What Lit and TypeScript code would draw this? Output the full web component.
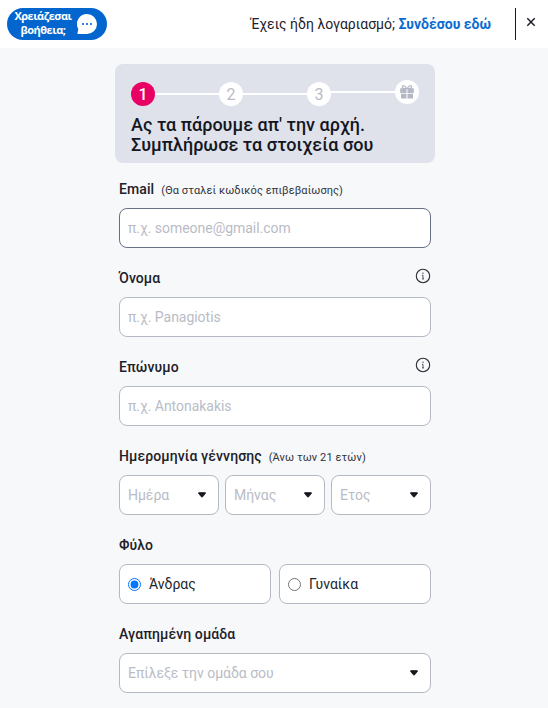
import { LitElement, html, css, svg, nothing } from "lit";
import { customElement } from "lit/decorators.js";

const infoIcon = html`<svg class="info" width="16" height="16" viewBox="0 0 16 16" fill="none">
  <circle cx="8" cy="8" r="6.7" stroke="#2a2e36" stroke-width="1.1" />
  <path d="M7 7.3H8V10.8M7 10.9H9" stroke="#2a2e36" stroke-width="0.8" />
  <circle cx="8" cy="5.2" r=".65" fill="#2a2e36" />
</svg>`;

const caret = html`<svg class="caret" width="10" height="8" viewBox="0 0 10 8">
  <path d="M2 1.6H8Q8.8 1.6 8.4 2.4L5.7 5.8Q5 6.5 4.3 5.8L1.6 2.4Q1.2 1.6 2 1.6Z" fill="#15181e" stroke="#15181e" stroke-width=".7" />
</svg>`;

const giftIcon = html`<svg width="16" height="16" viewBox="0 0 16 16" fill="none">
  <path d="M7.6 4.6C6.8 1.6 3.5 .6 3.4 2.9C3.4 4.4 5.4 4.6 7.6 4.6ZM8.4 4.6C9.2 1.6 12.5 .6 12.6 2.9C12.6 4.4 10.6 4.6 8.4 4.6Z" stroke="#b4b8c4" stroke-width="1.2" />
  <path d="M1.2 4.3H7.5V8.9H1.2ZM8.5 4.3H14.8V8.9H8.5ZM2 9.8H7.5V14.6H2ZM8.5 9.8H14V14.6H8.5Z" fill="#b4b8c4" />
</svg>`;

@customElement("app-root")
export class AppRoot extends LitElement {
  static styles = css`
    :host {
      display: block;
      height: 708px;
      overflow: hidden;
      box-sizing: border-box;
      background: #f7f8fa;
      color: #1d2129;
      font-family: Roboto, "Liberation Sans", sans-serif;
      font-size: 14px;
    }
    * { box-sizing: border-box; }
    header {
      height: 48px;
      background: #fff;
      display: flex;
      align-items: center;
      padding: 0 12px 0 7px;
    }
    .help {
      width: 100px;
      height: 32px;
      border: 0;
      border-radius: 16px;
      background: #0366ce;
      color: #fff;
      display: flex;
      align-items: center;
      padding: 0 10px 2px 7px;
      gap: 5px;
      font: 700 11px/14px "Open Sans", sans-serif;
      text-align: center;
    }
    .help span { width: 58px; white-space: nowrap; letter-spacing: -0.5px; }
    .help svg { flex: none; margin-top: 2px; }
    .login { margin-left: auto; white-space: nowrap; line-height: 20px; }
    .login a { color: #0a6ccf; font-weight: 700; }
    .rule { width: 1px; height: 32px; background: #16191f; margin: 0 10px 0 24px; }
    .close { display: block; margin-bottom: 5px; }
    .content { width: 320px; margin: 16px 0 0 115px; }
    .card {
      height: 99px;
      padding: 16px;
      border-radius: 8px;
      background: #dfe2ea;
    }
    .steps { display: flex; align-items: center; height: 24px; padding-top: 4px; }
    .step {
      width: 24px; height: 24px; flex: none;
      border-radius: 50%;
      background: #fff;
      color: #b9bcc6;
      font-size: 16px;
      display: flex; align-items: center; justify-content: center;
    }
    .step.active { background: #e80065; color: #fff; font-weight: 500; }
    .step.raised, .bar.raised { margin-top: -4px; }
    .bar { height: 2px; flex: 1; background: #fff; }
    h1 {
      margin: 11px 0 0;
      font-size: 18px;
      font-weight: 500;
      line-height: 20px;
      letter-spacing: 0.02px;
      white-space: nowrap;
      color: #14161f;
    }
    form { padding: 0 4px; margin: 16px 0 0; }
    .field { height: 89px; }
    .label { display: flex; align-items: center; height: 20px; margin-bottom: 9px; white-space: nowrap; }
    .label b { font-weight: 500; letter-spacing: 0.1px; }
    .label small { font-size: 11px; letter-spacing: 0.09px; margin: 2px 0 0 7px; color: #30343d; }
    .info { margin: -4px 0 0 auto; }
    .row { display: flex; gap: 6px; }
    .row.wide { gap: 8px; }
    .box {
      flex: 1;
      height: 40px;
      border: 1px solid #b5b9c4;
      border-radius: 8px;
      background: #fff;
      color: #b9bcc6;
      display: flex;
      align-items: center;
      padding: 0 11px 0 8px;
      white-space: nowrap;
      letter-spacing: -0.03px;
    }
    .box.focus { border-color: #687083; }
    .box.choice { color: #22262e; letter-spacing: 0; }
    .caret { margin-left: auto; }
    .radio { width: 13px; height: 13px; margin: 0 8px 0 0; }
  `;

  private label(text: string, hint = "", info = false) {
    return html`<div class="label"><b>${text}</b>${hint ? html`<small>${hint}</small>` : nothing}${info ? infoIcon : nothing}</div>`;
  }

  private select(text: string) {
    return html`<div class="box"><span>${text}</span>${caret}</div>`;
  }

  render() {
    return html`
      <header>
        <button class="help">
          <span>Χρειάζεσαι<br />βοήθεια;</span>
          <svg width="20" height="20" viewBox="0 0 20 20">
            <path d="M10 0A10 10 0 1 1 10 20H1.4Q0 20 .6 18.8L1.3 15A10 10 0 0 1 10 0Z" fill="#fff" />
            ${[6, 10, 14].map((x) => svg`<circle cx=${x} cy="10" r="1.1" fill="#0366ce" />`)}
          </svg>
        </button>
        <div class="login">Έχεις ήδη λογαριασμό; <a>Συνδέσου εδώ</a></div>
        <div class="rule"></div>
        <svg class="close" width="10" height="10" viewBox="0 0 10 10"><path d="M1.3 1.3 8.7 8.7M8.7 1.3 1.3 8.7" stroke="#16191f" stroke-width="1.4" /></svg>
      </header>
      <div class="content">
        <section class="card">
          <div class="steps">
            <div class="step active">1</div><div class="bar"></div>
            <div class="step">2</div><div class="bar"></div>
            <div class="step">3</div><div class="bar raised"></div>
            <div class="step raised">${giftIcon}</div>
          </div>
          <h1>Ας τα πάρουμε απ' την αρχή.<br />Συμπλήρωσε τα στοιχεία σου</h1>
        </section>
        <form>
          <div class="field">${this.label("Email", "(Θα σταλεί κωδικός επιβεβαίωσης)")}<div class="box focus">π.χ. someone@gmail.com</div></div>
          <div class="field">${this.label("Όνομα", "", true)}<div class="box">π.χ. Panagiotis</div></div>
          <div class="field">${this.label("Επώνυμο", "", true)}<div class="box">π.χ. Antonakakis</div></div>
          <div class="field">
            ${this.label("Ημερομηνία γέννησης", "(Άνω των 21 ετών)")}
            <div class="row">${["Ημέρα", "Μήνας", "Ετος"].map((t) => this.select(t))}</div>
          </div>
          <div class="field">
            ${this.label("Φύλο")}
            <div class="row wide">
              <label class="box choice"><input class="radio" type="radio" name="gender" checked />Άνδρας</label>
              <label class="box choice"><input class="radio" type="radio" name="gender" />Γυναίκα</label>
            </div>
          </div>
          <div class="field">${this.label("Αγαπημένη ομάδα")}${this.select("Επίλεξε την ομάδα σου")}</div>
        </form>
      </div>
    `;
  }
}
